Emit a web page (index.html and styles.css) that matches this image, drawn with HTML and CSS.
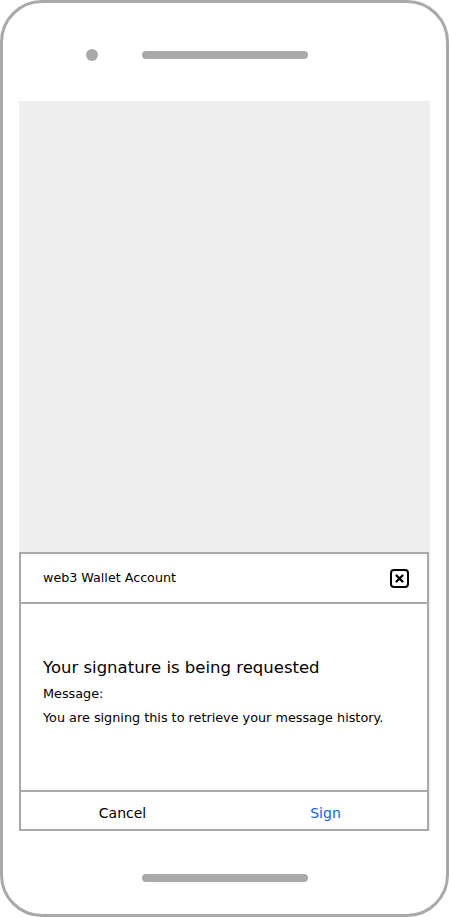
FILE: index.html
```html
<!DOCTYPE html>
<html lang="en">
<head>
<meta charset="utf-8">
<title>Signature request</title>
<link rel="stylesheet" href="styles.css">
</head>
<body>
<div class="phone">
  <div class="phone-top">
    <span class="camera"></span>
    <span class="speaker"></span>
  </div>
  <div class="screen">
    <div class="spacer"></div>
    <div class="dialog">
      <div class="dialog-header">
        <span class="dialog-title">web3 Wallet Account</span>
        <button class="close-btn" aria-label="Close">
          <svg width="19" height="19" viewBox="0 0 19 19">
            <rect x="1" y="1" width="17" height="17" rx="3" ry="3" fill="none" stroke="#000" stroke-width="2"/>
            <path d="M6.5 6.5 L12.5 12.5 M12.5 6.5 L6.5 12.5" stroke="#000" stroke-width="2.4" stroke-linecap="round"/>
          </svg>
        </button>
      </div>
      <div class="dialog-body">
        <h1 class="heading">Your signature is being requested</h1>
        <p class="label">Message:</p>
        <p class="message">You are signing this to retrieve your message history.</p>
      </div>
      <div class="dialog-footer">
        <span class="action">Cancel</span>
        <span class="action primary">Sign</span>
      </div>
    </div>
  </div>
  <div class="phone-bottom">
    <span class="home-bar"></span>
  </div>
</div>
</body>
</html>
```

FILE: styles.css
```css
* { box-sizing: border-box; }
html, body { margin: 0; padding: 0; background: #fff; }
body { font-family: "DejaVu Sans", "Noto Sans", sans-serif; color: #000; }

.phone {
  width: 449px;
  height: 917px;
  border: 3px solid #a9a9a9;
  border-radius: 42px;
  display: flex;
  flex-direction: column;
  overflow: hidden;
}

.phone-top {
  display: flex;
  align-items: flex-start;
  padding-top: 46px;
  height: 98px;
}
.camera {
  width: 12px;
  height: 12px;
  border-radius: 50%;
  background: #a9a9a9;
  margin-left: 83px;
  margin-right: 44px;
}
.speaker {
  width: 166px;
  height: 8px;
  border-radius: 4px;
  background: #a9a9a9;
  margin-top: 2px;
}

.screen {
  margin: 0 16px;
  height: 730px;
  background: #eeeeee;
  display: flex;
  flex-direction: column;
}
.spacer { flex: 1; }

.dialog {
  background: #fff;
  border: 2px solid #a9a9a9;
  width: 410px;
  display: flex;
  flex-direction: column;
}
.dialog-header {
  height: 50px;
  border-bottom: 2px solid #a9a9a9;
  display: flex;
  align-items: center;
  justify-content: space-between;
  padding: 0 18px 0 22px;
}
.dialog-title { font-size: 12.7px; margin-top: -2px; }
.close-btn {
  border: 0;
  background: none;
  padding: 0;
  margin: 0;
  width: 19px;
  height: 19px;
  display: block;
}
.close-btn svg { display: block; }

.dialog-body {
  height: 188px;
  border-bottom: 2px solid #a9a9a9;
  padding: 52px 22px 0;
}
.heading {
  margin: 0;
  font-size: 16.5px;
  font-weight: normal;
  line-height: 24px;
}
.label {
  margin: 5px 0 0;
  font-size: 12.8px;
  line-height: 18px;
}
.message {
  margin: 6px 0 0;
  font-size: 12.8px;
  line-height: 18px;
}

.dialog-footer {
  height: 37px;
  display: grid;
  grid-template-columns: 1fr 1fr;
  align-items: center;
  text-align: center;
  padding-top: 5px;
}
.action { font-size: 14px; }
.action.primary { color: #1a5fe6; }

.phone-bottom {
  display: flex;
  justify-content: center;
  padding-top: 43px;
}
.home-bar {
  width: 166px;
  height: 8px;
  border-radius: 4px;
  background: #a9a9a9;
}
```
